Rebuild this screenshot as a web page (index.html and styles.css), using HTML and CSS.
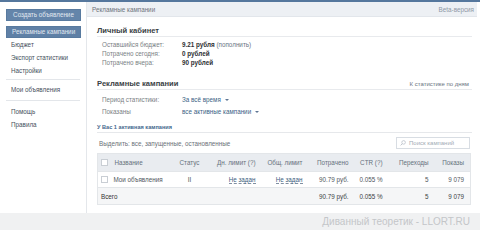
FILE: index.html
```html
<!DOCTYPE html>
<html lang="ru">
<head>
<meta charset="utf-8">
<title>Рекламные кампании</title>
<link rel="stylesheet" href="styles.css">
</head>
<body>
<div class="topbar"></div>
<div class="layout">
  <aside class="side">
    <a class="btn">Создать объявление</a>
    <a class="btn active">Рекламные кампании</a>
    <ul class="menu">
      <li>Бюджет</li>
      <li>Экспорт статистики</li>
      <li>Настройки</li>
    </ul>
    <ul class="menu sep">
      <li>Мои объявления</li>
    </ul>
    <ul class="menu sep">
      <li>Помощь</li>
      <li>Правила</li>
    </ul>
  </aside>
  <main class="panel">
    <div class="panel-head">
      <span>Рекламные кампании</span>
      <span class="beta">Beta-версия</span>
    </div>
    <div class="panel-body">
      <h2 class="sec-title first">Личный кабинет</h2>
      <div class="kv">
        <div class="k">Оставшийся бюджет:</div><div class="v"><b>9.21 рубля</b> <span class="link">(пополнить)</span></div>
        <div class="k">Потрачено сегодня:</div><div class="v"><b>0 рублей</b></div>
        <div class="k">Потрачено вчера:</div><div class="v"><b>90 рублей</b></div>
      </div>
      <h2 class="sec-title second"><span>Рекламные кампании</span><span class="sec-link">К статистике по дням</span></h2>
      <div class="kv filters">
        <div class="k">Период статистики:</div><div class="v"><span class="drop">За всё время</span></div>
        <div class="k">Показаны</div><div class="v"><span class="drop">все активные кампании</span></div>
      </div>
      <h3 class="sub-title">У Вас 1 активная кампания</h3>
      <div class="toolbar">
        <span class="select">Выделить: все, запущенные, остановленные</span>
        <label class="search">
          <svg class="mag" viewBox="0 0 8 8" width="6" height="6"><circle cx="4.8" cy="3.2" r="2.4" fill="none" stroke="#b8bfc8" stroke-width="1"/><path d="M3.1 4.9 L0.8 7.2" stroke="#b8bfc8" stroke-width="1.2"/></svg>
          <span class="ph">Поиск кампаний</span>
        </label>
      </div>
      <table class="grid">
        <colgroup>
          <col class="c-cb"><col class="c-name"><col class="c-status"><col class="c-dl"><col class="c-tl"><col class="c-sp"><col class="c-ctr"><col class="c-cl"><col class="c-sh">
        </colgroup>
        <thead>
          <tr>
            <th class="cb"><span class="box"></span></th>
            <th class="name">Название</th>
            <th class="status">Статус</th>
            <th class="num">Дн. лимит (?)</th>
            <th class="num">Общ. лимит</th>
            <th class="num">Потрачено</th>
            <th class="num">CTR (?)</th>
            <th class="num">Переходы</th>
            <th class="num last">Показы</th>
          </tr>
        </thead>
        <tbody>
          <tr class="row">
            <td class="cb"><span class="box"></span></td>
            <td class="name">Мои объявления</td>
            <td class="status">II</td>
            <td class="num"><span class="dash">Не задан</span></td>
            <td class="num"><span class="dash">Не задан</span></td>
            <td class="num">90.79 руб.</td>
            <td class="num">0.055 %</td>
            <td class="num">5</td>
            <td class="num last">9 079</td>
          </tr>
          <tr class="total">
            <td class="tot-label" colspan="5">Всего</td>
            <td class="num">90.79 руб.</td>
            <td class="num">0.055 %</td>
            <td class="num">5</td>
            <td class="num last">9 079</td>
          </tr>
        </tbody>
      </table>
    </div>
  </main>
</div>
<footer class="foot">Диванный теоретик - LLORT.RU</footer>
</body>
</html>
```
FILE: styles.css
```css
* { box-sizing: border-box; }
html, body { margin: 0; padding: 0; }
body {
  width: 480px;
  height: 230px;
  overflow: hidden;
  background: #ffffff;
  font-family: "Liberation Sans", Arial, sans-serif;
  font-size: 6.3px;
  color: #555;
}
.topbar { height: 2px; background: #55779d; }
.layout { display: flex; height: 211px; }

.side { width: 86px; flex: none; padding: 7px 0 0 6px; display: flex; flex-direction: column; }
.btn {
  display: block;
  width: 75px;
  height: 12px;
  line-height: 10px;
  text-align: center;
  white-space: nowrap;
  background: #6485aa;
  color: #e2e9f1;
  border: 1px solid #587a9f;
}
.btn + .btn { margin-top: 5px; }
.btn.active { text-align: left; padding-left: 5px; background: #5f80a6; }
.menu { list-style: none; margin: 0; padding: 0; width: 74px; }
.menu li { height: 13px; line-height: 13px; padding-left: 5px; color: #45505c; white-space: nowrap; }
.menu.sep { border-top: 1px solid #e3e6ea; margin-top: 2px; padding-top: 3px; }
.menu.sep + .menu.sep { margin-top: 4px; padding-top: 4px; }

.panel { flex: 1; margin-right: 3px; border-left: 1px solid #e4e7eb; display: flex; flex-direction: column; }
.panel-head {
  height: 15px;
  background: #edf0f4;
  border-bottom: 1px solid #e2e6eb;
  display: flex;
  justify-content: space-between;
  align-items: center;
  padding: 0 3px 0 5px;
  color: #6d747c;
}
.beta { color: #8d99a6; }
.panel-body { padding: 0 5px 0 10px; }

.sec-title {
  margin: 0;
  font-size: 7.6px;
  font-weight: bold;
  color: #3a3f45;
  height: 11px;
  line-height: 10px;
  border-bottom: 1px solid #e8eaed;
  display: flex;
  justify-content: space-between;
}
.sec-title.first { margin-top: 9px; }
.sec-title.second { margin-top: 12px; }
.sec-link { font-weight: normal; font-size: 6px; color: #6b7480; padding-right: 3px; }

.kv { display: grid; grid-template-columns: 80px auto; grid-auto-rows: 9px; line-height: 9px; margin-top: 3px; padding-left: 5px; }
.k { color: #7a7f85; white-space: nowrap; }
.v { color: #333; white-space: nowrap; }
.v b { color: #2d2f33; }
.link { color: #6a7583; }
.filters { grid-auto-rows: 12px; line-height: 12px; margin-top: 4px; }
.drop { color: #3b5f85; }
.drop::after { content: ""; display: inline-block; margin-left: 4px; vertical-align: middle; border-left: 2px solid transparent; border-right: 2px solid transparent; border-top: 2.5px solid #5e7694; }

.sub-title {
  margin: 4px 0 0;
  font-size: 5.6px;
  font-weight: bold;
  color: #45688e;
  height: 11px;
  line-height: 10px;
  border-bottom: 1px solid #e6e8eb;
}
.toolbar { display: flex; justify-content: space-between; align-items: center; margin-top: 4px; height: 12px; padding-left: 2px; margin-right: 2px; }
.select { color: #6b7178; }
.search {
  width: 74px; height: 12px;
  border: 1px solid #d8dde3;
  background: #fff;
  display: flex; align-items: center;
  padding-left: 3px;
  gap: 3px;
}
.ph { color: #a3acb6; font-size: 6px; }

.grid { width: 373px; margin-top: 4px; border-collapse: collapse; table-layout: fixed; border: 1px solid #e3e6e9; }
.c-cb { width: 13px; } .c-name { width: 60px; } .c-status { width: 40px; } .c-dl { width: 47px; } .c-tl { width: 47px; }
.c-sp { width: 46px; } .c-ctr { width: 34px; } .c-cl { width: 46px; } .c-sh { width: 40px; }
.grid th, .grid td { padding: 0 2px 0 0; white-space: nowrap; font-weight: normal; }
.grid thead th { height: 18px; background: #e9ecf0; color: #66717d; }
.grid .row td { height: 16px; color: #50565d; border-top: 1px solid #e3e6e9; }
.grid .total td { height: 17px; background: #f5f6f7; color: #3b3f44; border-top: 1px solid #e3e6e9; }
.grid .cb { padding-left: 3px; }
.box { display: block; width: 7px; height: 7px; border: 1px solid #c9ced4; background: #fff; }
.grid .name { text-align: left; padding-left: 4px; }
.grid .row .name { padding-left: 3px; }
.grid .status { text-align: center; }
.grid .num { text-align: right; }
.grid .last { padding-right: 6px; }
.dash { border-bottom: 1px dashed #7f8fa2; color: #40607f; }
.tot-label { font-weight: bold; padding-left: 3px !important; color: #333 !important; }

.foot {
  height: 17px;
  background: #f0f1f2;
  text-align: right;
  padding-right: 10px;
  font-size: 10px;
  line-height: 18px;
  color: #c4c6c9;
}
```
